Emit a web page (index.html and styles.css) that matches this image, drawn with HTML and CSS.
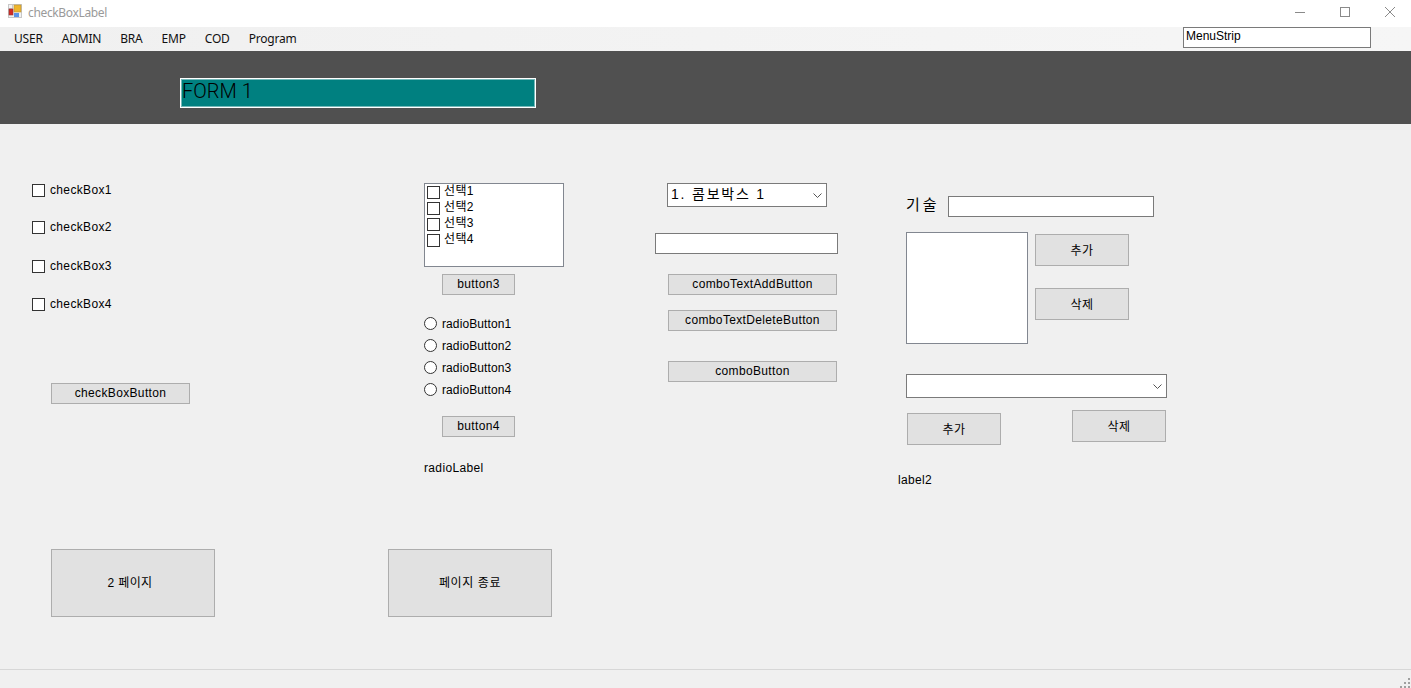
FILE: index.html
```html
<!DOCTYPE html>
<html lang="ko">
<head>
  <meta charset="UTF-8" />
  <title>checkBoxLabel</title>
  <link rel="stylesheet" href="styles.css">
</head>
<body>
  <div class="window">
    <div class="titlebar">
      <svg class="app-icon" width="14" height="14" viewBox="0 0 14 14">
        <rect x="0.5" y="0.5" width="13" height="13" fill="#f2f2f2" stroke="#c8c8c8"/>
        <path d="M0 4.5H5M4.5 0V5" stroke="#c8c8c8"/>
        <rect x="6" y="1" width="7" height="7" fill="#eeb52c" stroke="#b8923a" stroke-width="0.6"/>
        <rect x="1" y="5" width="4" height="6" fill="#d42a22" stroke="#8f3a3a" stroke-width="0.6"/>
        <rect x="6" y="9" width="5" height="4" fill="#5b93e6"/>
      </svg>
      <span class="title-text">checkBoxLabel</span>
      <div class="window-btns">
        <svg width="10" height="10" viewBox="0 0 10 10"><path d="M0 5.5H10" stroke="#8a8a8a"/></svg>
        <svg width="10" height="10" viewBox="0 0 10 10"><rect x="0.5" y="0.5" width="9" height="9" fill="none" stroke="#8a8a8a"/></svg>
        <svg width="10" height="10" viewBox="0 0 10 10"><path d="M0 0L10 10M10 0L0 10" stroke="#8a8a8a"/></svg>
      </div>
    </div>

    <div class="menubar">
      <span class="menu-item">USER</span>
      <span class="menu-item">ADMIN</span>
      <span class="menu-item">BRA</span>
      <span class="menu-item">EMP</span>
      <span class="menu-item">COD</span>
      <span class="menu-item">Program</span>
      <div class="menu-strip">MenuStrip</div>
    </div>

    <div class="banner">
      <div class="banner-title">FORM 1</div>
    </div>

    <div class="form-area">
      <div class="col col-check">
        <label class="check-row"><span class="box"></span>checkBox1</label>
        <label class="check-row row-b"><span class="box"></span>checkBox2</label>
        <label class="check-row row-c"><span class="box"></span>checkBox3</label>
        <label class="check-row row-d"><span class="box"></span>checkBox4</label>
        <button class="btn check-btn">checkBoxButton</button>
        <button class="btn page-btn next-page">2 페이지</button>
      </div>

      <div class="col col-list">
        <div class="stack">
          <div class="list check-list">
            <div class="list-item"><span class="box"></span><span class="item-text">선택1</span></div>
            <div class="list-item"><span class="box"></span><span class="item-text">선택2</span></div>
            <div class="list-item"><span class="box"></span><span class="item-text">선택3</span></div>
            <div class="list-item"><span class="box"></span><span class="item-text">선택4</span></div>
          </div>
          <button class="btn small-btn btn3">button3</button>
          <div class="radios">
            <label class="radio-row"><span class="circle"></span>radioButton1</label>
            <label class="radio-row"><span class="circle"></span>radioButton2</label>
            <label class="radio-row"><span class="circle"></span>radioButton3</label>
            <label class="radio-row"><span class="circle"></span>radioButton4</label>
          </div>
          <button class="btn small-btn btn4">button4</button>
          <div class="text-label radio-label">radioLabel</div>
        </div>
        <button class="btn page-btn exit-page">페이지 종료</button>
      </div>

      <div class="col col-combo">
        <div class="combo combo-main">
          <span class="combo-text">1. 콤보박스 1</span>
          <svg width="9" height="5" viewBox="0 0 9 5"><path d="M0.5 0.5L4.5 4.5L8.5 0.5" fill="none" stroke="#555"/></svg>
        </div>
        <div class="textbox combo-input"></div>
        <button class="btn wide-btn add-text">comboTextAddButton</button>
        <button class="btn wide-btn del-text">comboTextDeleteButton</button>
        <button class="btn wide-btn combo-btn">comboButton</button>
      </div>

      <div class="col col-skill">
        <div class="skill-row">
          <span class="skill-label">기술</span>
          <div class="textbox skill-input"></div>
        </div>
        <div class="skill-list-row">
          <div class="list skill-list"></div>
          <div class="skill-btns">
            <button class="btn tall-btn">추가</button>
            <button class="btn tall-btn">삭제</button>
          </div>
        </div>
        <div class="combo combo-skill">
          <span></span>
          <svg width="9" height="5" viewBox="0 0 9 5"><path d="M0.5 0.5L4.5 4.5L8.5 0.5" fill="none" stroke="#555"/></svg>
        </div>
        <div class="combo-btns">
          <button class="btn tall-btn add-skill">추가</button>
          <button class="btn tall-btn">삭제</button>
        </div>
        <div class="text-label skill-note">label2</div>
      </div>
    </div>

    <div class="statusbar">
      <svg width="10" height="10" viewBox="0 0 10 10" fill="#a0a0a0">
        <rect x="8" y="0" width="2" height="2"/>
        <rect x="4" y="4" width="2" height="2"/>
        <rect x="8" y="4" width="2" height="2"/>
        <rect x="0" y="8" width="2" height="2"/>
        <rect x="4" y="8" width="2" height="2"/>
        <rect x="8" y="8" width="2" height="2"/>
      </svg>
    </div>
  </div>
</body>
</html>
```

FILE: styles.css
```css
:root {
  --form-bg: #f0f0f0;
  --btn-bg: #e1e1e1;
  --btn-line: #adadad;
  --field-line: #7a7a7a;
  --list-line: #828790;
}

* {
  box-sizing: border-box;
}

body {
  margin: 0;
  overflow: hidden;
  font-family: "Liberation Sans", "Noto Sans CJK KR", sans-serif;
  font-size: 12px;
  letter-spacing: 0.35px;
  color: #000;
  background-color: var(--form-bg);
}

.window {
  display: flex;
  flex-direction: column;
  height: 100vh;
}

/* title bar */
.titlebar {
  display: flex;
  align-items: center;
  height: 27px;
  padding: 0 16px 5px 8px;
  background: #fff;
  flex-shrink: 0;
}

.app-icon {
  margin-right: 6px;
}

.title-text {
  margin-top: 2px;
  font-family: "Noto Sans", sans-serif;
  letter-spacing: -0.35px;
  color: #9a9a9a;
}

.window-btns {
  display: flex;
  gap: 35px;
  margin: 1px 0 0 auto;
}

/* menu */
.menubar {
  display: flex;
  align-items: center;
  height: 24px;
  padding-left: 14px;
  background: linear-gradient(to right, #f0f0f0, #f6f6f6);
  flex-shrink: 0;
}

.menu-item {
  margin: -2px 19px 0 0;
  font-family: "Noto Sans", sans-serif;
  letter-spacing: -0.2px;
  color: #111;
}

.menu-strip {
  width: 188px;
  height: 21px;
  margin: -3px 40px 0 auto;
  padding: 0 2px;
  line-height: 16px;
  letter-spacing: 0;
  background: #fff;
  border: 1px solid var(--field-line);
}

/* dark band */
.banner {
  height: 73px;
  padding: 27px 0 0 180px;
  background: #505050;
  flex-shrink: 0;
}

.banner-title {
  width: 356px;
  height: 30px;
  padding-left: 1px;
  font-family: Roboto, sans-serif;
  font-size: 20px;
  font-weight: 300;
  line-height: 25px;
  letter-spacing: 0;
  background: #008080;
  border: 1px solid #fff;
  box-shadow: inset 0 0 0 1px rgba(255, 255, 255, 0.45);
}

/* form columns */
.form-area {
  display: flex;
  flex: 1;
}

.col {
  display: flex;
  flex-direction: column;
  align-items: flex-start;
}

.col-check {
  width: 388px;
  padding: 60px 0 0 32px;
}

.col-list {
  width: 267px;
  padding-top: 59px;
}

.col-combo {
  width: 243px;
  padding-top: 59px;
}

.col-skill {
  flex: 1;
  padding-top: 72px;
}

.stack {
  display: flex;
  flex-direction: column;
  align-items: flex-start;
  padding-left: 36px;
}

.btn {
  padding: 0 0 2px;
  font: inherit;
  letter-spacing: inherit;
  color: #000;
  background: var(--btn-bg);
  border: 1px solid var(--btn-line);
}

.box {
  width: 13px;
  height: 13px;
  flex-shrink: 0;
  background: #fff;
  border: 1px solid #333;
}

.circle {
  width: 13px;
  height: 13px;
  flex-shrink: 0;
  background: #fff;
  border: 1px solid #333;
  border-radius: 50%;
}

.check-row,
.radio-row {
  display: flex;
  gap: 5px;
  height: 13px;
}

.check-row {
  align-items: flex-start;
  line-height: 12px;
}

.radio-row {
  align-items: center;
  letter-spacing: 0.1px;
}

.row-b {
  margin-top: 24px;
}

.row-c {
  margin-top: 26px;
}

.row-d {
  margin-top: 25px;
}

.check-btn {
  width: 139px;
  height: 21px;
  margin: 72px 0 0 19px;
}

.page-btn {
  width: 164px;
  height: 68px;
  padding-bottom: 3px;
}

.next-page {
  margin: 145px 0 0 19px;
  padding-right: 6px;
}

.exit-page {
  margin-top: 74px;
  letter-spacing: 0.6px;
}

.list {
  background: #fff;
  border: 1px solid var(--list-line);
}

.check-list {
  width: 140px;
  height: 84px;
  padding-left: 2px;
}

.list-item {
  display: flex;
  align-items: center;
  gap: 4px;
  height: 16px;
}

.item-text {
  margin-bottom: 6px;
}

.small-btn {
  width: 73px;
  height: 21px;
  margin-left: 18px;
}

.btn3 {
  margin-top: 7px;
}

.radios {
  display: flex;
  flex-direction: column;
  gap: 9px;
  margin-top: 22px;
}

.btn4 {
  margin-top: 20px;
}

.text-label {
  height: 14px;
  line-height: 14px;
}

.radio-label {
  margin-top: 24px;
}

.combo {
  display: flex;
  align-items: center;
  justify-content: space-between;
  height: 24px;
  padding: 0 4px 0 3px;
  background: #fff;
  border: 1px solid var(--field-line);
}

.combo-main {
  width: 160px;
  margin-left: 12px;
}

.combo-text {
  margin-bottom: 4px;
  font-size: 14px;
  letter-spacing: 1.8px;
}

.textbox {
  height: 21px;
  background: #fff;
  border: 1px solid var(--field-line);
}

.combo-input {
  width: 183px;
  margin-top: 26px;
}

.wide-btn {
  width: 169px;
  height: 21px;
  margin-left: 13px;
}

.add-text {
  margin-top: 20px;
}

.del-text {
  margin-top: 15px;
}

.combo-btn {
  margin-top: 30px;
}

.skill-row {
  display: flex;
  align-items: center;
  margin-left: 8px;
}

.skill-label {
  width: 42px;
  margin-top: -7px;
  font-size: 15px;
  letter-spacing: 3px;
}

.skill-input {
  width: 206px;
}

.skill-list-row {
  display: flex;
  gap: 7px;
  margin: 15px 0 0 8px;
}

.skill-list {
  width: 122px;
  height: 112px;
}

.skill-btns {
  display: flex;
  flex-direction: column;
  gap: 22px;
  padding-top: 2px;
}

.tall-btn {
  width: 94px;
  height: 32px;
}

.combo-skill {
  width: 261px;
  margin: 30px 0 0 8px;
}

.combo-btns {
  display: flex;
  align-items: flex-start;
  gap: 71px;
  margin: 12px 0 0 9px;
}

.add-skill {
  margin-top: 3px;
}

.skill-note {
  margin-top: 28px;
}

/* status bar */
.statusbar {
  display: flex;
  align-items: flex-end;
  justify-content: flex-end;
  height: 19px;
  padding-right: 1px;
  border-top: 1px solid #d7d7d7;
  flex-shrink: 0;
}
```
